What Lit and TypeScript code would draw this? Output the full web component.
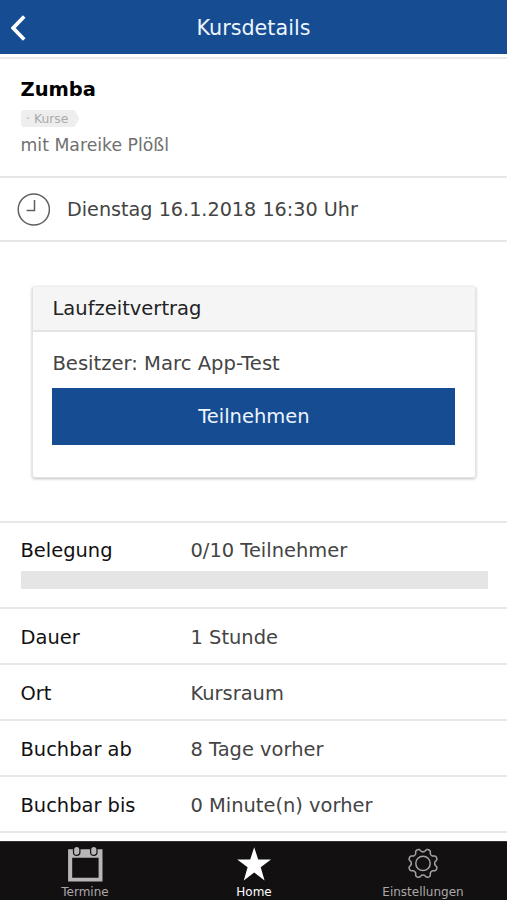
import { LitElement, html, css, svg } from "lit";
import { customElement, property } from "lit/decorators.js";

const gearPath = (() => {
  const points: string[] = [];
  for (let i = 0; i < 180; i++) {
    const a = (i / 180) * Math.PI * 2;
    const wave = Math.tanh(-1.6 * Math.cos(8 * a)) / Math.tanh(1.6);
    const r = 13.2 + 1.5 * wave;
    points.push(`${(16 + r * Math.sin(a)).toFixed(2)} ${(16.4 - r * Math.cos(a)).toFixed(2)}`);
  }
  return `M${points.join("L")}Z`;
})();

const icons = {
  calendar: svg`
    <path fill="#b9b6b7" fill-rule="evenodd" d="M-.9 2.3H33.5V34.6H-.9ZM3.2 10.8V30.8H29.6V10.8Z"/>
    <rect x="4.5" y="-.6" width="6.4" height="9" rx="3.2" fill="#b9b6b7" stroke="#131011" stroke-width="1.2"/>
    <rect x="21.6" y="-.6" width="6.4" height="9" rx="3.2" fill="#b9b6b7" stroke="#131011" stroke-width="1.2"/>`,
  star: svg`<path fill="#fff" d="M16.2 .2 20.2 12.4 33 12.5 22.7 20.2 26.6 33.6 16.2 25.5 5.8 33.6 9.6 20.2-.8 12.5 12.2 12.4Z"/>`,
  gear: svg`<g fill="none" stroke="#a5a2a3" stroke-width="1.5" stroke-linejoin="round"><path d=${gearPath}/><circle cx="16" cy="16.4" r="7.2"/></g>`,
};

@customElement("tab-item")
class TabItem extends LitElement {
  @property() icon: keyof typeof icons = "star";
  @property() label = "";
  @property({ type: Boolean }) active = false;
  static styles = css`
    :host { flex: 1; display: flex; flex-direction: column; align-items: center; padding-top: 5px; color: #aaa7a8; font-size: 12px; line-height: 16px; }
    :host([active]) { color: #fff; }
    svg { width: 32px; height: 32px; overflow: visible; display: block; margin-bottom: 5px; }
    span { padding-left: 1px; }
  `;
  render() {
    return html`<svg viewBox="0 0 32 32">${icons[this.icon]}</svg><span>${this.label}</span>`;
  }
}

@customElement("detail-row")
class DetailRow extends LitElement {
  @property() label = "";
  @property() value = "";
  static styles = css`
    :host { display: block; border-bottom: 2px solid #e8e8e8; padding: 17px 19.5px 13px 20.5px; }
    .line { display: flex; font-size: 19.45px; line-height: 24px; color: #444; }
    .label { width: 170px; color: #111; }
  `;
  render() {
    return html`<div class="line"><span class="label">${this.label}</span><span>${this.value}</span></div><slot></slot>`;
  }
}

@customElement("app-root")
class AppRoot extends LitElement {
  static styles = css`
    :host { display: flex; flex-direction: column; height: 900px; overflow: hidden; background: #fff; font-family: "DejaVu Sans", sans-serif; font-size: 19.2px; color: #444; }
    * { box-sizing: border-box; }
    header { height: 54px; flex: none; display: grid; grid-template-columns: 40px 1fr 40px; align-items: center; background: #164c91; color: #edf5ff; text-align: center; font-size: 20.7px; }
    .title { padding-top: 2px; }
    .back { width: 16px; height: 26px; margin: 1px 0 0 11px; display: block; }
    main { flex: 1; min-height: 0; margin-top: 3px; border-top: 2px solid #e9ebec; }
    .course { height: 119px; padding: 18px 20.5px 0; border-bottom: 2px solid #e6e6e6; }
    h1 { margin: 0; font-size: 19.5px; line-height: 26px; color: #000; }
    .tag { display: block; width: 59px; height: 17px; margin-top: 7px; padding-left: 5.5px; font-size: 12.4px; line-height: 17px; color: #aaa; background: #eee; border-radius: 3px 0 0 3px; clip-path: polygon(0 0, 54px 0, 100% 50%, 54px 100%, 0 100%); white-space: nowrap; }
    .trainer { font-size: 17.3px; line-height: 22px; margin-top: 7px; color: #707070; }
    .date { height: 64px; display: flex; align-items: center; gap: 17px; padding-left: 17px; border-bottom: 2px solid #e6e6e6; }
    .clock { width: 33px; height: 33px; }
    .contract { margin: 44px 31px 43px 32px; height: 192px; border: 1px solid #e3e3e3; border-top-color: #eee; border-radius: 3px; box-shadow: 0 1px 3px rgba(0,0,0,.25); overflow: hidden; }
    .contract-title { height: 45px; padding-left: 19.5px; background: #f5f5f5; border-bottom: 2px solid #e3e3e3; color: #222; font-size: 19.5px; line-height: 43px; }
    .contract-body { padding: 19px 19.4px; font-size: 19.6px; line-height: 26px; }
    .join { display: block; width: 403px; height: 57px; margin-top: 11px; padding: 0; border: 0; border-radius: 0; background: #164c91; color: #edf5ff; font: inherit; font-size: 19.5px; }
    .details { border-top: 2px solid #e8e8e8; }
    .occupancy { height: 18px; margin: 9px 0 4px; background: #e5e5e5; }
    detail-row:first-child { padding-top: 16px; }
    detail-row:first-child .occupancy { margin-top: 8px; margin-bottom: 5px; }
    nav { height: 59px; flex: none; display: flex; background: #131011; border-top: 1px solid #333; }
  `;
  render() {
    return html`
      <header>
        <svg class="back" viewBox="0 0 16 26"><path d="M13.2 1.5 2.2 13l11 11.5" fill="none" stroke="#fff" stroke-width="3.7"/></svg>
        <span class="title">Kursdetails</span>
      </header>
      <main>
        <section class="course">
          <h1>Zumba</h1>
          <span class="tag">· Kurse</span>
          <div class="trainer">mit Mareike Plößl</div>
        </section>
        <section class="date">
          <svg class="clock" viewBox="0 0 33 33" fill="none" stroke="#606060" stroke-width="1.5"><circle cx="16.8" cy="16.5" r="15.6"/><path d="M17.5 7v10.4H9.6"/></svg>
          <span>Dienstag 16.1.2018 16:30 Uhr</span>
        </section>
        <section class="contract">
          <div class="contract-title">Laufzeitvertrag</div>
          <div class="contract-body">
            <div>Besitzer: Marc App-Test</div>
            <button class="join">Teilnehmen</button>
          </div>
        </section>
        <section class="details">
          <detail-row label="Belegung" value="0/10 Teilnehmer"><div class="occupancy"></div></detail-row>
          <detail-row label="Dauer" value="1 Stunde"></detail-row>
          <detail-row label="Ort" value="Kursraum"></detail-row>
          <detail-row label="Buchbar ab" value="8 Tage vorher"></detail-row>
          <detail-row label="Buchbar bis" value="0 Minute(n) vorher"></detail-row>
        </section>
      </main>
      <nav>
        <tab-item icon="calendar" label="Termine"></tab-item>
        <tab-item icon="star" label="Home" active></tab-item>
        <tab-item icon="gear" label="Einstellungen"></tab-item>
      </nav>`;
  }
}
